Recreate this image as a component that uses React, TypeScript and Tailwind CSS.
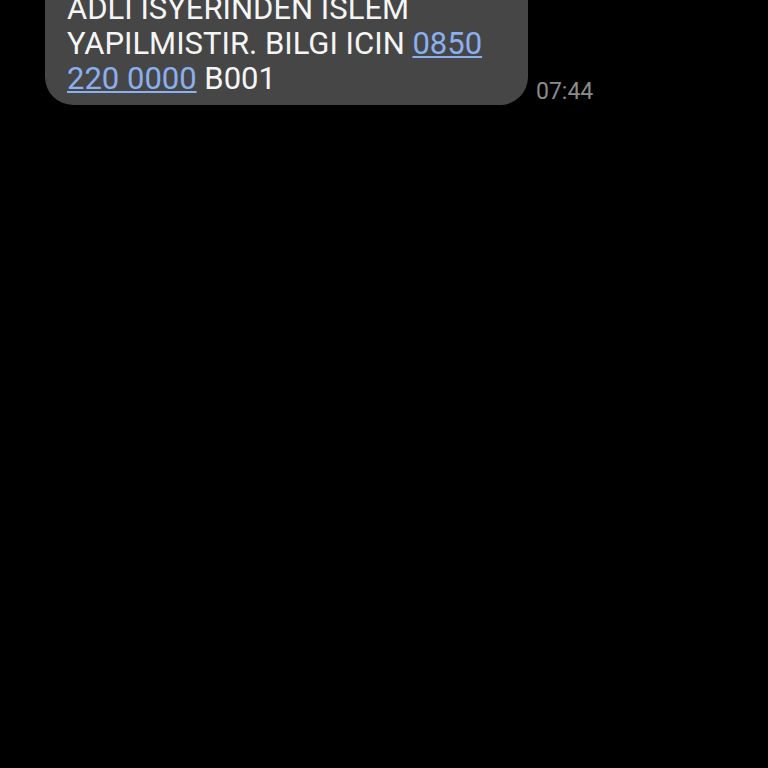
const message = {
  text: "ADLI ISYERINDEN ISLEM YAPILMISTIR. BILGI ICIN ",
  phone: "0850 220 0000",
  code: " B001",
  time: "07:44",
};

const MessageBubble = () => (
  <div className="flex items-end gap-2 pl-[45px]">
    <p className="max-w-[483px] rounded-b-[28px] bg-[#464646] px-[22px] pb-[9px] text-[31px] leading-[35px] text-[#f5f5f5]">
      {message.text}
      <a
        href="tel:08502200000"
        className="text-[#8ab0f0] underline decoration-2 underline-offset-2"
      >
        {message.phone}
      </a>
      {message.code}
    </p>
    <time className="text-[23px] leading-[26px] text-[#8c8c8c]">{message.time}</time>
  </div>
);

const App = () => {
  return (
    <main className="min-h-screen overflow-hidden bg-black font-['Roboto',sans-serif]">
      {/* Scrolled to the end of the thread, so the first line runs under the top edge */}
      <div className="-mt-[9px]">
        <MessageBubble />
      </div>
    </main>
  );
};

export default App;
